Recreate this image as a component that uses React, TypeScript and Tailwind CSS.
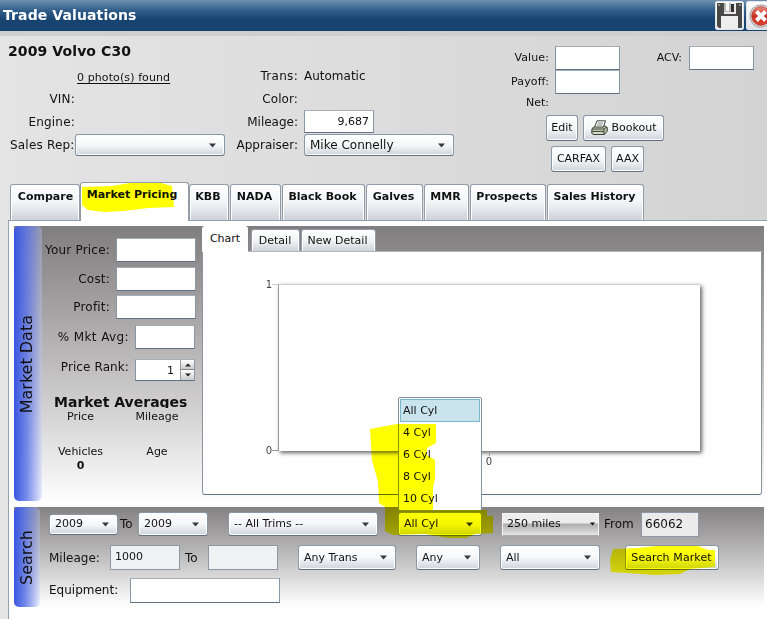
import React from "react";

const FIELD = "border border-t-[#a3aeb9] border-x-[#8796a5] border-b-[#617084] bg-white shrink-0";
const RAISED =
  "border border-[#8a98a6] border-b-[#5f7083] rounded-[3px] shadow-[inset_0_0_0_1px_#fff] bg-linear-to-b from-white via-[#f6f7f9] to-[#cfd5dc] shrink-0";

function Label({ className = "", children }: { className?: string; children: React.ReactNode }) {
  return <span className={`block shrink-0 whitespace-nowrap ${className}`}>{children}</span>;
}

function Combo({ className = "", text = "" }: { className?: string; text?: string }) {
  return (
    <div className={`flex items-center justify-between pl-[5px] pr-[8px] ${RAISED} ${className}`}>
      <span className="whitespace-nowrap">{text}</span>
      <svg width="7" height="5" viewBox="0 0 7 5" className="shrink-0">
        <path d="M0 .5h7L3.5 4.5z" fill="#343b42" />
      </svg>
    </div>
  );
}

function Button({ className = "", children }: { className?: string; children: React.ReactNode }) {
  return (
    <button className={`flex items-center justify-center whitespace-nowrap text-[11px] ${RAISED} ${className}`}>
      {children}
    </button>
  );
}

const TAB =
  "shrink-0 whitespace-nowrap rounded-t-[3px] border border-b-0 border-[#919ca8] shadow-[inset_1px_1px_0_#fff,inset_-1px_0_0_#fff] bg-linear-to-b from-white via-[#f3f4f6] to-[#cdd2d9] text-center";

const tabs = [
  { name: "KBB", size: "w-[40px]" },
  { name: "NADA", size: "w-[51px]" },
  { name: "Black Book", size: "w-[83px]" },
  { name: "Galves", size: "w-[57px]" },
  { name: "MMR", size: "w-[45px]" },
  { name: "Prospects", size: "w-[76px]" },
  { name: "Sales History", size: "w-[97px]" },
];

function TitleBar() {
  return (
    <header className="flex h-[31px] shrink-0 bg-linear-to-b from-[#7091b0] via-[#2f5c88] via-35% to-[#164370] to-65% pl-[3px]">
      <Label className="w-[712px] text-[14px] leading-[30px] font-bold tracking-[0.1px] text-white">Trade Valuations</Label>
      <div className="mt-px flex h-[29px] w-[29px] shrink-0 items-center justify-center rounded-[2px] border border-[#dfe4e9] bg-linear-to-b from-white to-[#e9ebee]">
        <svg width="25" height="25" viewBox="0 0 25 25">
          <path d="M0 0h25v25H2l-2-2z" fill="#4a4747" />
          <path d="M7 0h12v11H7z" fill="#e9e9ea" />
          <path d="M7 0h7v9H7z" fill="#b9b8b9" />
          <path d="M9 0h3v8H9z" fill="#f5f5f5" />
          <path d="M14 1h3v8h-3z" fill="#312f30" />
          <path d="M4 13h17v12H4z" fill="#eeeeef" />
          <path d="M1 1h2v2H1zM22 1h2v2h-2z" fill="#8c8a8a" />
        </svg>
      </div>
      <div className="mt-px ml-[2px] flex h-[29px] w-[29px] shrink-0 items-center rounded-[2px] border border-[#dfe4e9] bg-linear-to-b from-white to-[#dfe3e8] pl-[2px]">
        <svg width="24" height="24" viewBox="0 0 24 24" className="shrink-0">
          <defs>
            <linearGradient id="red" x1="0" y1="0" x2="0" y2="1">
              <stop offset="0" stopColor="#ec8e82" />
              <stop offset=".5" stopColor="#cb2f22" />
              <stop offset="1" stopColor="#dc4031" />
            </linearGradient>
          </defs>
          <circle cx="12" cy="12" r="11.5" fill="#a9a5a5" />
          <circle cx="12" cy="12" r="10.5" fill="#e3dddd" />
          <circle cx="12" cy="12" r="9.3" fill="url(#red)" stroke="#b2372d" strokeWidth=".8" />
          <path d="M7.5 7.5l9 9M16.5 7.5l-9 9" stroke="#fff" strokeWidth="4" />
        </svg>
      </div>
    </header>
  );
}

function PrinterIcon() {
  return (
    <svg width="17" height="16" viewBox="0 0 17 16" className="mr-[4px]">
      <path d="M1 8.5L4 6h10l2.3 1.5V11l-2.8 3.5H2L.7 13z" fill="#b9c2aa" stroke="#3d4338" />
      <path d="M3.5 7L6 .8h8.5L12.4 7z" fill="#fff" stroke="#3d4338" />
      <path d="M6.6 3h5.5M5.9 5h5.5" stroke="#777" strokeWidth=".9" />
      <path d="M1 9h12l3-2M13 9v5.2M1 11.5h12" stroke="#3d4338" fill="none" strokeWidth=".9" />
      <path d="M3 13h8" stroke="#f1f4e9" />
    </svg>
  );
}

function VehicleHeader() {
  return (
    <section className="flex h-[151px] shrink-0">
      <div className="w-[230px] shrink-0 pt-[6px]">
        <h1 className="mb-[2px] ml-[8px] h-[21px] text-[14px] leading-[20px] font-bold whitespace-nowrap tracking-[0.1px]">2009 Volvo C30</h1>
        <div className="h-[23px] pl-[77px] text-[11px] leading-[27px] tracking-[0.1px] underline underline-offset-2 whitespace-nowrap">0 photo(s) found</div>
        <Label className="h-[23px] w-[75px] text-right leading-[24px] tracking-[0.2px]">VIN:</Label>
        <Label className="h-[23px] w-[75px] text-right leading-[24px] tracking-[0.2px]">Engine:</Label>
        <div className="flex h-[24px] items-center">
          <Label className="w-[74px] pl-[10px] tracking-[0.2px]">Sales Rep:</Label>
          <Combo className="ml-px h-[22px] w-[150px]" />
        </div>
      </div>
      <div className="w-[270px] shrink-0 pt-[29px]">
        <div className="flex h-[23px] items-center gap-[6px]">
          <Label className="w-[68px] text-right tracking-[0.3px]">Trans:</Label>
          <Label>Automatic</Label>
        </div>
        <div className="flex h-[23px] items-center">
          <Label className="w-[68px] text-right tracking-[0.1px]">Color:</Label>
        </div>
        <div className="flex h-[23px] items-center gap-[6px]">
          <Label className="w-[68px] text-right">Mileage:</Label>
          <div className={`h-[23px] w-[70px] pr-[4px] text-right text-[11px] leading-[22px] ${FIELD}`}>9,687</div>
        </div>
        <div className="flex h-[24px] items-center gap-[6px]">
          <Label className="w-[68px] text-right">Appraiser:</Label>
          <Combo className="h-[22px] w-[150px]" text="Mike Connelly" />
        </div>
      </div>
      <div className="w-[267px] shrink-0 pt-[11px] text-[11px]">
        <div className="flex h-[24px] items-center">
          <Label className="w-[49px] text-right tracking-[0.1px]">Value:</Label>
          <div className={`ml-[6px] h-[24px] w-[65px] ${FIELD}`} />
          <Label className="w-[63px] pr-px text-right">ACV:</Label>
          <div className={`ml-[6px] h-[24px] w-[65px] ${FIELD}`} />
        </div>
        <div className="flex h-[24px] items-center">
          <Label className="w-[49px] text-right tracking-[0.1px]">Payoff:</Label>
          <div className={`ml-[6px] h-[24px] w-[65px] ${FIELD}`} />
        </div>
        <Label className="h-[21px] w-[49px] text-right leading-[17px]">Net:</Label>
        <div className="ml-[46px] flex gap-[5px]">
          <Button className="h-[26px] w-[32px]">Edit</Button>
          <Button className="h-[26px] w-[81px]">
            <PrinterIcon />
            Bookout
          </Button>
        </div>
        <div className="mt-[5px] ml-[51px] flex gap-[5px]">
          <Button className="h-[26px] w-[55px]">CARFAX</Button>
          <Button className="h-[26px] w-[33px]">AAX</Button>
        </div>
      </div>
    </section>
  );
}

function MainTabs() {
  return (
    <nav className="ml-[10px] flex h-[38px] shrink-0 items-end text-[11px] font-bold">
      <div className={`h-[36px] w-[70px] pt-[4px] pl-px ${TAB}`}>Compare</div>
      <div className="relative z-10 -mb-px h-[39px] w-[109px] shrink-0 rounded-t-[3px] border border-b-0 border-[#919ca8] bg-white pr-[5px] pt-[4px] text-center whitespace-nowrap">
        Market Pricing
      </div>
      <div className="flex gap-px">
        {tabs.map((t) => (
          <div key={t.name} className={`h-[36px] pt-[4px] pr-[2px] ${t.size} ${TAB}`}>
            {t.name}
          </div>
        ))}
      </div>
    </nav>
  );
}

function SideBand({ text, className }: { text: string; className: string }) {
  return (
    <div className={`flex shrink-0 items-center justify-center rounded-[5px] bg-linear-to-r from-[#3a55e2] via-[#5f77e6]/85 via-45% to-[#c8d0ff]/35 ${className}`}>
      <span className="rotate-180 text-[16px] leading-[20px] whitespace-nowrap [writing-mode:vertical-rl]">{text}</span>
    </div>
  );
}

function Chart() {
  return (
    <div className="flex h-[244px] w-[560px] rounded-b-[3px] border border-[#8995a2] border-t-[#b3b5b9] border-b-[#5f7083] bg-[#fefefe] text-[10px] text-[#444]">
      <div className="flex w-[69px] shrink-0 flex-col items-end justify-between pt-[26px] pb-[37px] leading-[13px]">
        <span>1</span>
        <span>0</span>
      </div>
      <div className="flex shrink-0 flex-col pt-[32px]">
        <div className="flex">
          <div className="flex h-[167px] w-[6px] flex-col justify-between">
            <i className="block h-px bg-[#ccc]" />
            <i className="block h-px bg-[#999]" />
          </div>
          <div className="h-[167px] w-[422px] border-l border-t border-l-[#999] border-t-[#cfcfcf] bg-white shadow-[2px_2px_4px_#666]" />
        </div>
        <div className="ml-[212px] flex w-[10px] flex-col items-center leading-[12px]">
          <i className="block h-[5px] w-px bg-[#999]" />
          <span>0</span>
        </div>
      </div>
    </div>
  );
}

function MarketData() {
  const prices = [
    { name: "Your Price:", row: "h-[24px] mb-[5px]" },
    { name: "Cost:", row: "h-[24px] mb-[4px]" },
    { name: "Profit:", row: "h-[24px] mb-[6px]" },
  ];
  return (
    <section className="flex h-[275px] w-[750px] shrink-0 bg-linear-to-b from-[#807d7e] to-[#fefefe]">
      <SideBand text="Market Data" className="h-[275px] w-[28px] pt-[2px] pr-[3px]" />
      <div className="w-[160px] shrink-0 pt-[12px]">
        {prices.map((p) => (
          <div key={p.name} className={`flex items-center gap-[6px] ${p.row}`}>
            <Label className="w-[68px] text-right tracking-[0.2px]">{p.name}</Label>
            <div className={`h-[24px] w-[80px] ${FIELD}`} />
          </div>
        ))}
        <div className="flex h-[24px] items-center gap-[6px]">
          <Label className="w-[87px] text-right tracking-[0.4px]">% Mkt Avg:</Label>
          <div className={`h-[24px] w-[60px] ${FIELD}`} />
        </div>
        <div className="mt-[10px] flex h-[22px] gap-[6px]">
          <Label className="w-[87px] text-right leading-[16px] tracking-[0.1px]">Price Rank:</Label>
          <div className={`flex h-[22px] w-[60px] ${FIELD}`}>
            <span className="w-[44px] pr-[6px] text-right text-[11px] leading-[22px]">1</span>
            <div className="flex w-[14px] flex-col border-l border-[#999]">
              <div className="flex h-[10px] items-center justify-center border-b border-[#888] bg-linear-to-b from-white to-[#ccc]">
                <svg width="6" height="4"><path d="M0 3.5h6L3 .5z" fill="#222" /></svg>
              </div>
              <div className="flex h-[10px] items-center justify-center bg-linear-to-b from-white to-[#ccc]">
                <svg width="6" height="4"><path d="M0 .5h6L3 3.5z" fill="#222" /></svg>
              </div>
            </div>
          </div>
        </div>
        <h2 className="mt-[12px] ml-[12px] h-[15px] overflow-hidden text-[14px] leading-[19px] font-bold whitespace-nowrap">Market Averages</h2>
        <div className="mt-[2px] grid grid-cols-[77px_76px] text-center text-[11px] leading-[14px]">
          <span>Price</span>
          <span>Mileage</span>
        </div>
        <div className="mt-[21px] grid grid-cols-[77px_76px] text-center text-[11px] leading-[14px]">
          <span>Vehicles</span>
          <span>Age</span>
          <b>0</b>
        </div>
      </div>
      <div className="w-[561px] shrink-0">
        <div className="flex h-[25px] items-end text-[11px]">
          <div className="relative z-10 -mb-px h-[26px] w-[46px] rounded-t-[3px] bg-[#fefefe] pt-[5px] text-center">Chart</div>
          <div className={`ml-[3px] h-[22px] w-[49px] pt-[3px] pr-px ${TAB}`}>Detail</div>
          <div className={`ml-px h-[22px] w-[75px] pt-[3px] pr-[2px] ${TAB}`}>New Detail</div>
        </div>
        <Chart />
      </div>
    </section>
  );
}

function CylinderPicker() {
  return (
    <div className="relative ml-[20px] h-[24px] w-[84px] shrink-0">
      <Combo className="h-[24px] w-[84px]" text="All Cyl" />
      <ul className="absolute bottom-[25px] left-0 h-[114px] w-[84px] rounded-[2px] border border-[#8097a5] bg-white p-px leading-[22px]">
        <li className="h-[23px] border border-[#7ab8cb] bg-[#c9e4ed] pl-[2px]">All Cyl</li>
        <li className="h-[22px] pl-[3px]">4 Cyl</li>
        <li className="h-[22px] pl-[3px]">6 Cyl</li>
        <li className="h-[22px] pl-[3px]">8 Cyl</li>
        <li className="h-[22px] pl-[3px]">10 Cyl</li>
      </ul>
      <svg className="pointer-events-none absolute -top-[91px] -left-[31px] mix-blend-multiply" width="126" height="124" viewBox="367 421 126 124">
        <path
          d="M370 429l27-5h39v19l-9 5v7l8 5v18l-2 10v22h54v6h7v17l-19 1-9 4h-18l-23-4-32 1-8-4v-24l-6-4-1-21-6-22z"
          fill="#ff0"
        />
      </svg>
    </div>
  );
}

function SearchPanel() {
  return (
    <section className="mt-[6px] flex h-[100px] w-[750px] shrink-0 bg-linear-to-b from-[#838182] to-[#fdfdfd] to-97% text-[11px]">
      <SideBand text="Search" className="h-[100px] w-[26px] pr-px" />
      <div className="w-[724px] shrink-0 pt-[4px] pl-[9px]">
        <div className="flex h-[26px] items-center">
          <Combo className="h-[21px] w-[69px]" text="2009" />
          <Label className="w-[20px] pl-[2px] text-[12px]">To</Label>
          <Combo className="h-[24px] w-[70px]" text="2009" />
          <Combo className="ml-[20px] h-[24px] w-[150px]" text="-- All Trims --" />
          <CylinderPicker />
          <div className="ml-[20px] flex h-[23px] w-[97px] shrink-0 items-center justify-between border border-[#f5f5f5] border-b-[#aaa] bg-linear-to-b from-[#eee] from-40% via-[#b0b0b0] via-50% to-[#e5e5e5] pr-[3px] pl-[4px]">
            <span>250 miles</span>
            <svg width="5" height="4"><path d="M0 .5h5L2.5 3.5z" fill="#111" /></svg>
          </div>
          <Label className="ml-[5px] w-[37px] text-[12px]">From</Label>
          <div className="h-[25px] w-[58px] shrink-0 border border-[#8d98a4] bg-[#ebebec] pl-[3px] text-[12px] leading-[23px]">66062</div>
        </div>
        <div className="mt-[8px] flex h-[25px] items-center">
          <Label className="w-[61px] text-[12px]">Mileage:</Label>
          <div className="h-[25px] w-[70px] shrink-0 border border-[#8d98a4] bg-[#f0f1f3] pl-[4px] leading-[22px]">1000</div>
          <Label className="w-[28px] pl-[5px] text-[12px]">To</Label>
          <div className="h-[25px] w-[70px] shrink-0 border border-[#8d98a4] bg-[#f0f1f3]" />
          <Combo className="ml-[20px] h-[25px] w-[98px]" text="Any Trans" />
          <Combo className="ml-[20px] h-[25px] w-[64px]" text="Any" />
          <Combo className="ml-[20px] h-[25px] w-[100px]" text="All" />
          <div className="relative ml-[25px] shrink-0">
            <Button className="h-[25px] w-[94px] pr-px">
              <span className="tracking-[0.1px]">Search Market</span>
            </Button>
            <svg className="pointer-events-none absolute top-0 -left-[15px] mix-blend-multiply" width="107" height="30" viewBox="610 545 107 30">
              <path d="M613 549l24-1 19-2h42l10 4h7v17l-25 2-10 5-25 1-28-2-16-1-1-12z" fill="#ff0" fillOpacity=".95" />
            </svg>
          </div>
        </div>
        <div className="mt-[7px] flex h-[26px] items-center">
          <Label className="w-[81px] text-[12px]">Equipment:</Label>
          <div className={`h-[25px] w-[150px] ${FIELD}`} />
        </div>
      </div>
    </section>
  );
}

export default function App() {
  return (
    <div className="relative flex h-[619px] w-[767px] flex-col overflow-hidden bg-linear-to-r from-[#e4e4e4] via-[#dcdcdc] to-[#d3d3d3] font-['DejaVu_Sans',Verdana,sans-serif] text-[12px] leading-[16px] text-[#111]">
      <TitleBar />
      <div className="h-[5px] shrink-0 bg-[#cfcfcf]" />
      <div className="-mt-px flex h-[584px] flex-col">
        <VehicleHeader />
        <div className="-mt-[4px]">
          <MainTabs />
        </div>
        <main className="ml-[8px] flex h-[400px] w-[759px] shrink-0 flex-col border-t border-l border-[#93a0ad] bg-[#fefefe] pt-[5px] pl-[5px]">
          <MarketData />
          <SearchPanel />
        </main>
      </div>
      <svg className="pointer-events-none absolute top-[182px] left-[82px] z-20 mix-blend-multiply" width="94" height="32" viewBox="82 182 94 32">
        <path d="M82 187l30-1 18-3h31l11 3 2 21-26 1-24 3-20 1-16-2-6-5z" fill="#ff0" />
      </svg>
    </div>
  );
}
